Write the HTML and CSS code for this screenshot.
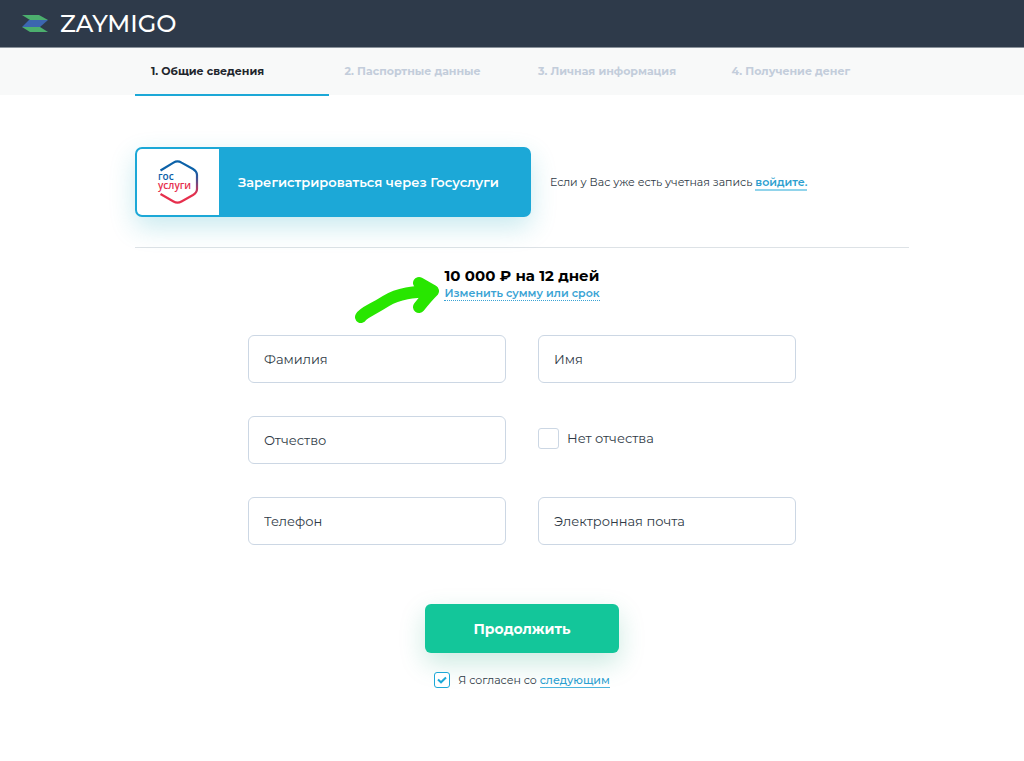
FILE: index.html
```html
<!DOCTYPE html>
<html lang="ru">
<head>
    <meta charset="UTF-8">
    <meta name="viewport" content="width=device-width, initial-scale=1.0">
    <title>Zaymigo</title>
    <link rel="stylesheet" href="styles.css">
</head>
<body>
    <header class="header">
        <a class="logo" href="#">
            <svg class="logo-icon" width="26" height="17" viewBox="0 0 26 17" aria-hidden="true">
                <path d="M7 5H26L18 12H0Z" fill="#3c66b0"/>
                <path d="M0 0H17L26 5H8Z" fill="#4caf6e"/>
                <path d="M0 12H18L26 17H8Z" fill="#4caf6e"/>
            </svg>
            <span class="logo-text">ZAYMIGO</span>
        </a>
    </header>

    <!-- Registration steps -->
    <nav class="steps">
        <ol class="steps-list">
            <li class="step active">1. Общие сведения</li>
            <li class="step">2. Паспортные данные</li>
            <li class="step">3. Личная информация</li>
            <li class="step">4. Получение денег</li>
        </ol>
    </nav>

    <main class="main">
        <div class="register">
            <button class="gos-btn" type="button">
                <span class="gos-logo">
                    <svg width="42" height="44" viewBox="0 0 42 44" aria-hidden="true">
                        <defs>
                            <linearGradient id="gosLine" gradientUnits="userSpaceOnUse" x1="0" y1="10" x2="0" y2="34">
                                <stop offset="0" stop-color="#0b61a8"/>
                                <stop offset="0.3" stop-color="#33549a"/>
                                <stop offset="1" stop-color="#e62f4d"/>
                            </linearGradient>
                        </defs>
                        <path d="M3.5 10.5L16.5 2.6Q20.5 0.2 24.5 2.6L36 9Q40 11.5 40 15V29Q40 32.5 36 35L24.5 41.5Q20.5 43.8 16.5 41.5L3.5 34" fill="none" stroke="url(#gosLine)" stroke-width="2.2"/>
                        <text class="gos-top" x="1" y="20">гос</text>
                        <text class="gos-bottom" x="1" y="29">услуги</text>
                    </svg>
                </span>
                <span class="gos-label">Зарегистрироваться через Госуслуги</span>
            </button>
            <p class="login">Если у Вас уже есть учетная запись <a class="link" href="#">войдите.</a></p>
        </div>

        <div class="offer">
            <svg class="arrow" width="88" height="50" viewBox="0 0 88 50" aria-hidden="true">
                <path d="M7 42C10 37 18 35 32 26C45 18 59 17 78 16" />
                <path d="M65 8L79 16Q73 22 65 32" />
            </svg>
            <h1 class="offer-title">10 000 ₽ на 12 дней</h1>
            <a class="offer-link" href="#">Изменить сумму или срок</a>
        </div>

        <form class="form">
            <div class="fields">
                <input class="field" type="text" placeholder="Фамилия" aria-label="Фамилия">
                <input class="field" type="text" placeholder="Имя" aria-label="Имя">
                <input class="field" type="text" placeholder="Отчество" aria-label="Отчество">
                <div class="no-patronymic">
                    <input class="check" type="checkbox" id="noPatronymic">
                    <label for="noPatronymic">Нет отчества</label>
                </div>
                <input class="field" type="tel" placeholder="Телефон" aria-label="Телефон">
                <input class="field" type="email" placeholder="Электронная почта" aria-label="Электронная почта">
            </div>

            <button class="submit-btn" type="button">Продолжить</button>

            <div class="agree">
                <span class="agree-box">
                    <input class="check check-small" type="checkbox" id="agree" checked>
                    <svg class="tick" width="10" height="8" viewBox="0 0 10 8" aria-hidden="true">
                        <path d="M1 3.6L4 6.3L9 1.5" />
                    </svg>
                </span>
                <label for="agree">Я согласен со <a class="link link-plain" href="#">следующим</a></label>
            </div>
        </form>
    </main>
</body>
</html>
```

FILE: styles.css
```css
* {
    box-sizing: border-box;
}

body {
    margin: 0;
    font-family: Montserrat, Inter, sans-serif;
    font-size: 13px;
    color: #2f3a46;
    background-color: #ffffff;
}

button, input {
    font-family: inherit;
}

/* Header */
.header {
    display: flex;
    align-items: center;
    height: 48px;
    padding: 0 22px;
    background-color: #2e3a4a;
    border-bottom: 1px solid #8a929b;
}

.logo {
    display: flex;
    align-items: center;
    gap: 12px;
    color: #ffffff;
    text-decoration: none;
}

.logo-text {
    font-size: 24px;
    line-height: 28px;
    font-weight: 500;
}

/* Steps */
.steps {
    height: 47px;
    padding-left: 20px;
    background-color: #f8f9f9;
}

.steps-list {
    display: grid;
    grid-template-columns: repeat(4, 1fr);
    max-width: 774px;
    margin: 0 auto;
    padding: 0;
    list-style: none;
}

.step {
    height: 48px;
    padding: 0 16px;
    font-size: 11px;
    line-height: 46px;
    font-weight: 700;
    color: #c3cddb;
    white-space: nowrap;
}

.step.active {
    color: #1f262d;
    border-bottom: 2px solid #1ca8d7;
}

/* Content */
.main {
    padding: 52px 0 40px 20px;
}

.register {
    display: flex;
    align-items: center;
    gap: 19px;
    max-width: 774px;
    margin: 0 auto;
    padding-bottom: 30px;
    border-bottom: 1px solid #dde2e6;
}

.gos-btn {
    display: flex;
    flex: none;
    width: 396px;
    height: 70px;
    padding: 0;
    background-color: #1ca8d7;
    color: #ffffff;
    border: 2px solid #1ca8d7;
    border-radius: 7px;
    box-shadow: 0 10px 26px rgba(28, 168, 190, 0.24);
    cursor: pointer;
}

.gos-logo {
    display: flex;
    align-items: center;
    justify-content: center;
    width: 82px;
    height: 100%;
    background-color: #ffffff;
    border-radius: 5px 0 0 5px;
}

.gos-logo text {
    font-family: "Open Sans", sans-serif;
    font-size: 10px;
    font-weight: 600;
}

.gos-top {
    fill: #0b61a8;
}

.gos-bottom {
    fill: #e62f4d;
}

.gos-label {
    align-self: center;
    padding-left: 19px;
    font-size: 13px;
    font-weight: 600;
}

.login {
    margin: 0;
    font-size: 11px;
    white-space: nowrap;
}

.link {
    color: #2d9fd0;
    font-weight: 600;
    text-decoration: none;
    border-bottom: 2px solid #91d4eb;
}

.link-plain {
    font-weight: 500;
    border-bottom: 1px solid #4cb4dc;
}

.offer {
    position: relative;
    width: fit-content;
    margin: 17px auto 0;
}

.offer-title {
    margin: 0;
    font-size: 15px;
    line-height: 22px;
    font-weight: 700;
    color: #000000;
}

.offer-link {
    display: block;
    width: fit-content;
    font-size: 11px;
    line-height: 13px;
    font-weight: 600;
    color: #3aa3d4;
    text-decoration: none;
    border-bottom: 1px dotted #3aa3d4;
}

.arrow {
    position: absolute;
    right: 100%;
    top: 10px;
    margin-right: 2px;
    fill: none;
    stroke: #28e600;
    stroke-width: 12;
    stroke-linecap: round;
    stroke-linejoin: round;
}

/* Form */
.form {
    display: flex;
    flex-direction: column;
    align-items: center;
    margin-top: 34px;
}

.fields {
    display: grid;
    grid-template-columns: 1fr 1fr;
    gap: 33px 32px;
    width: 100%;
    max-width: 548px;
}

.field {
    width: 100%;
    height: 48px;
    padding: 0 15px;
    font-size: 13px;
    border: 1px solid #ccd7e4;
    border-radius: 6px;
}

.field::placeholder {
    color: #2f3a46;
    opacity: 1;
}

.no-patronymic {
    display: flex;
    align-items: center;
    gap: 8px;
    height: 44px;
}

.check {
    flex: none;
    width: 21px;
    height: 21px;
    margin: 0;
    appearance: none;
    background-color: #ffffff;
    border: 1px solid #ccd7e4;
    border-radius: 3px;
}

.check-small {
    display: block;
    width: 16px;
    height: 16px;
    border-color: #1ca8d7;
}

.submit-btn {
    width: 194px;
    height: 49px;
    margin-top: 59px;
    background-color: #13c69a;
    color: #ffffff;
    font-size: 14px;
    font-weight: 700;
    border: none;
    border-radius: 6px;
    box-shadow: 0 10px 26px rgba(19, 160, 120, 0.22);
    cursor: pointer;
}

.agree {
    display: flex;
    align-items: center;
    gap: 8px;
    margin-top: 19px;
    font-size: 11px;
}

.agree-box {
    position: relative;
}

.tick {
    position: absolute;
    left: 3px;
    top: 4px;
    fill: none;
    stroke: #1ca8d7;
    stroke-width: 2;
    pointer-events: none;
}

.check-small:not(:checked) + .tick {
    display: none;
}
```
